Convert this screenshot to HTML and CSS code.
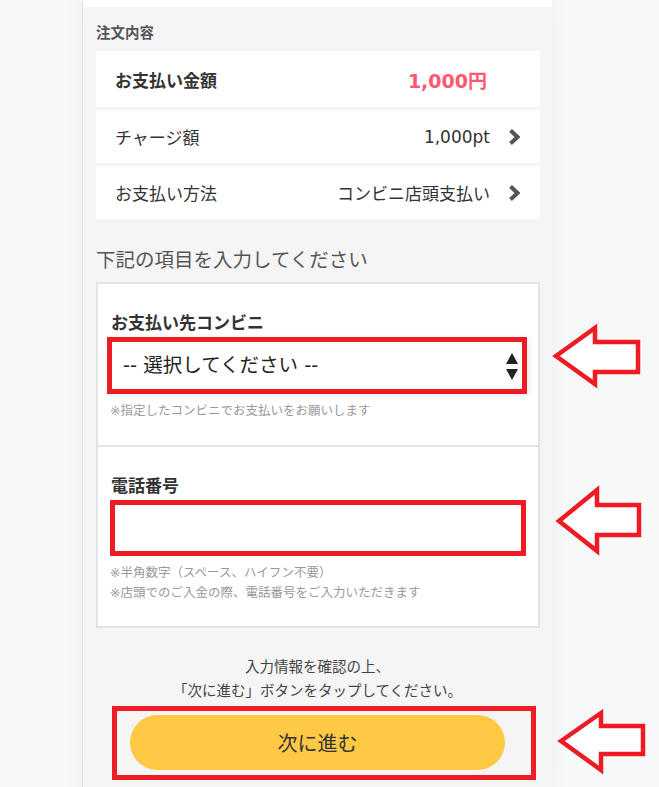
FILE: index.html
```html
<!DOCTYPE html>
<html lang="ja">
<head>
    <meta charset="UTF-8">
    <meta name="viewport" content="width=device-width, initial-scale=1.0">
    <title>コンビニ支払い</title>
    <link rel="stylesheet" href="styles.css">
</head>
<body>
    <div class="page">
        <div class="page-top"></div>

        <h2 class="section-title">注文内容</h2>
        <ul class="order-list">
            <li class="order-row order-row--total">
                <span class="order-label">お支払い金額</span>
                <span class="order-value">1,000円</span>
            </li>
            <li class="order-row">
                <span class="order-label">チャージ額</span>
                <span class="order-value">1,000pt</span>
                <svg class="chevron" viewBox="0 0 12 18"><polyline points="2.5,2.5 9.5,9 2.5,15.5"/></svg>
            </li>
            <li class="order-row">
                <span class="order-label">お支払い方法</span>
                <span class="order-value">コンビニ店頭支払い</span>
                <svg class="chevron" viewBox="0 0 12 18"><polyline points="2.5,2.5 9.5,9 2.5,15.5"/></svg>
            </li>
        </ul>

        <p class="form-lead">下記の項目を入力してください</p>

        <div class="form-box">
            <div class="form-field">
                <label class="field-label">お支払い先コンビニ</label>
                <div class="select-wrap">
                    <select class="field-select">
                        <option>-- 選択してください --</option>
                    </select>
                    <svg class="select-arrows" viewBox="0 0 12 28"><polygon points="6,0 12,11 0,11"/><polygon points="0,16 12,16 6,27"/></svg>
                </div>
                <p class="field-note">※指定したコンビニでお支払いをお願いします</p>
            </div>
            <div class="form-field">
                <label class="field-label">電話番号</label>
                <input class="field-input" type="tel">
                <p class="field-note">※半角数字（スペース、ハイフン不要）<br>※店頭でのご入金の際、電話番号をご入力いただきます</p>
            </div>
        </div>

        <p class="confirm-text">入力情報を確認の上、<br>「次に進む」ボタンをタップしてください。</p>

        <div class="next-wrap">
            <button class="next-btn">次に進む</button>
        </div>
    </div>

    <!-- guide arrows drawn over the page -->
    <svg class="guide-arrows" viewBox="0 0 659 787">
        <polygon points="556,356 595,328 595,342 638,342 638,372 595,372 595,384"/>
        <polygon points="559,521 597,490 597,505 639,505 639,535 597,535 597,551"/>
        <polygon points="561,741 601,713 601,726 643,726 643,754 601,754 601,770"/>
    </svg>
</body>
</html>
```

FILE: styles.css
```css
* {
    margin: 0;
    padding: 0;
    box-sizing: border-box;
}

body {
    background: #f7f8f8;
    font-family: "DejaVu Sans", "Noto Sans CJK JP", sans-serif;
    color: #333;
    position: relative;
    min-height: 100vh;
    overflow: hidden;
}

.page {
    width: 470px;
    min-height: 787px;
    margin-left: 82px;
    background: #f5f5f5;
    border-left: 1px solid #e0e0e0;
    box-shadow: 0 0 24px rgba(0, 0, 0, 0.045);
    padding-bottom: 10px;
}

.page-top {
    height: 7px;
    background: #fff;
}

.section-title {
    margin: 17px 12px 9px 13px;
    font-size: 14.5px;
    line-height: 18px;
    font-weight: bold;
    color: #555;
}

.order-list {
    list-style: none;
    margin: 0 12px 0 13px;
    display: flex;
    flex-direction: column;
    gap: 3px;
}

.order-row {
    display: flex;
    align-items: center;
    height: 53px;
    padding: 0 20px 0 19px;
    background: #fff;
    font-size: 17px;
    color: #333;
}

.order-label {
    flex: 1;
}

.order-row--total {
    height: 56px;
    padding-right: 53px;
}

.order-row--total .order-label {
    font-weight: bold;
}

.order-row--total .order-value {
    font-weight: bold;
    font-size: 19px;
    color: #ff5870;
}

.chevron {
    width: 12px;
    height: 18px;
    margin-left: 18px;
    fill: none;
    stroke: #555;
    stroke-width: 4;
}

.form-lead {
    margin: 28px 12px 7px 13px;
    font-size: 19.5px;
    line-height: 28px;
    color: #555;
}

.form-box {
    margin: 0 12px 0 13px;
    background: #fff;
    border: 2px solid #e3e3e3;
}

.form-field {
    padding: 27px 12px 24px 12px;
}

.form-field + .form-field {
    border-top: 2px solid #e3e3e3;
    padding-bottom: 23px;
}

.field-label {
    display: block;
    padding-left: 1px;
    margin-bottom: 2px;
    font-size: 17px;
    line-height: 24px;
    font-weight: bold;
    color: #333;
}

.select-wrap {
    position: relative;
    margin: 0 -1px 0 -3px;
}

.field-select {
    appearance: none;
    -webkit-appearance: none;
    display: block;
    width: 100%;
    height: 57px;
    padding: 0 30px 0 11px;
    border: 5px solid #ed1c24;
    border-radius: 0;
    background: #fff;
    font-family: inherit;
    font-size: 19.5px;
    color: #222;
    box-shadow: 2px 2px 6px rgba(90, 130, 200, 0.15);
}

.select-arrows {
    position: absolute;
    right: 9px;
    top: 16px;
    width: 12px;
    height: 28px;
    fill: #222;
}

.field-input {
    display: block;
    width: 100%;
    height: 56px;
    border: 5px solid #ed1c24;
    background: #fff;
    font-family: inherit;
    font-size: 18px;
    padding: 0 10px;
}

.field-note {
    margin-top: 7px;
    font-size: 12.5px;
    line-height: 20px;
    color: #999;
}

.confirm-text {
    margin: 27px 0 3px;
    text-align: center;
    font-size: 14.5px;
    line-height: 24px;
    color: #444;
}

.next-wrap {
    width: 424px;
    margin-left: 29px;
    border: 5px solid #ed1c24;
    padding: 4px 0 5px 13px;
}

.next-btn {
    display: block;
    width: 375px;
    height: 55px;
    border: none;
    border-radius: 28px;
    background: #ffc845;
    font-family: inherit;
    font-size: 20px;
    color: #333;
    cursor: pointer;
}

.guide-arrows {
    position: absolute;
    top: 0;
    left: 0;
    width: 659px;
    height: 787px;
    pointer-events: none;
    fill: #fff;
    stroke: #ed1c24;
    stroke-width: 4.5;
    stroke-linejoin: miter;
}
```
